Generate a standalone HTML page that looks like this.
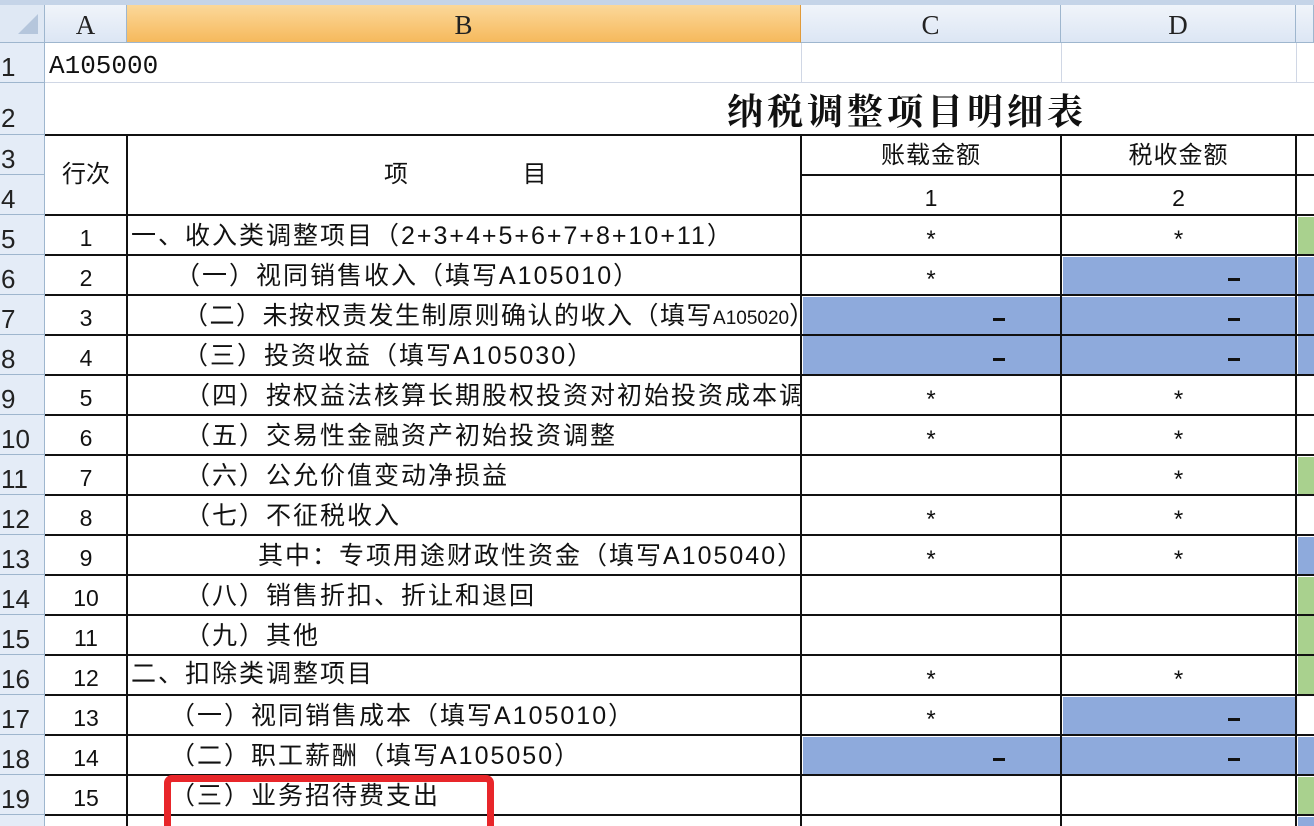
<!DOCTYPE html>
<html style="width:1314px;height:826px;overflow:hidden"><head><meta charset="utf-8"><style>
*{margin:0;padding:0;box-sizing:border-box}
body{width:1314px;height:826px;overflow:hidden;background:#fff;position:relative;font-family:"Liberation Sans","Noto Sans CJK SC",sans-serif;color:#111}
.a{position:absolute}
.rh{position:absolute;left:0;width:45px;background:#e4ecf7;border-bottom:1px solid #9eb6ce;border-right:1px solid #9eb6ce;font-family:"Liberation Sans",sans-serif;font-size:26px;color:#222;padding-left:1px}
.ch{position:absolute;top:5px;height:38px;background:linear-gradient(#f0f4fa,#dce6f4);border-right:1px solid #9eb6ce;border-bottom:1px solid #9eb6ce;font-family:"Liberation Serif",serif;font-size:27px;text-align:center;line-height:40px;color:#222}
.hl{position:absolute;left:45px;width:1269px;height:2px;background:#111}
.vl{position:absolute;top:135px;width:2px;height:691px;background:#111}
.t{position:absolute;font-family:"Liberation Sans","Noto Sans CJK SC",sans-serif;font-size:25px;letter-spacing:2px;white-space:nowrap;line-height:40px;height:40px}
.n{position:absolute;left:45px;width:82px;text-align:center;font-size:23px;line-height:40px;font-family:"Liberation Sans",sans-serif}
.s{position:absolute;font-size:24px;line-height:44px;text-align:center}
.bl{position:absolute;background:#8eaadc}
.gr{position:absolute;background:#a9d18e}
.d{position:absolute;width:12px;height:3px;background:#111}
</style></head><body>
<div class="a" style="left:0;top:0;width:1314px;height:5px;background:#c5d4e8"></div>
<div class="a" style="left:0;top:5px;width:45px;height:38px;background:#dfe8f4;border-right:1px solid #9eb6ce;border-bottom:1px solid #9eb6ce"></div>
<div class="a" style="left:18px;top:14px;width:0;height:0;border-left:20px solid transparent;border-bottom:20px solid #b5c6dc"></div>
<div class="ch" style="left:45px;width:82px">A</div>
<div class="ch" style="left:127px;width:674px;background:linear-gradient(#fbd89a,#f6b95c);border-right:1px solid #e09a3a">B</div>
<div class="ch" style="left:801px;width:260px">C</div>
<div class="ch" style="left:1061px;width:235px">D</div>
<div class="ch" style="left:1296px;width:18px"></div>

<div class="rh" style="top:43px;height:40px;line-height:48px">1</div>
<div class="rh" style="top:83px;height:52px;line-height:70px">2</div>
<div class="rh" style="top:135px;height:40px;line-height:48px">3</div>
<div class="rh" style="top:175px;height:40px;line-height:48px">4</div>
<div class="rh" style="top:215px;height:40px;line-height:48px">5</div>
<div class="rh" style="top:255px;height:40px;line-height:48px">6</div>
<div class="rh" style="top:295px;height:40px;line-height:48px">7</div>
<div class="rh" style="top:335px;height:40px;line-height:48px">8</div>
<div class="rh" style="top:375px;height:40px;line-height:48px">9</div>
<div class="rh" style="top:415px;height:40px;line-height:48px">10</div>
<div class="rh" style="top:455px;height:40px;line-height:48px">11</div>
<div class="rh" style="top:495px;height:40px;line-height:48px">12</div>
<div class="rh" style="top:535px;height:40px;line-height:48px">13</div>
<div class="rh" style="top:575px;height:40px;line-height:48px">14</div>
<div class="rh" style="top:615px;height:40px;line-height:48px">15</div>
<div class="rh" style="top:655px;height:40px;line-height:48px">16</div>
<div class="rh" style="top:695px;height:40px;line-height:48px">17</div>
<div class="rh" style="top:735px;height:40px;line-height:48px">18</div>
<div class="rh" style="top:775px;height:40px;line-height:48px">19</div>
<div class="rh" style="top:815px;height:11px;border-bottom:none"></div>

<div class="a" style="left:45px;top:82px;width:1269px;height:1px;background:#d0d7e5"></div>
<div class="a" style="left:801px;top:43px;width:1px;height:40px;background:#d0d7e5"></div>
<div class="a" style="left:1061px;top:43px;width:1px;height:40px;background:#d0d7e5"></div>
<div class="a" style="left:1296px;top:43px;width:1px;height:40px;background:#d0d7e5"></div>
<div class="a" style="left:49px;top:43px;font-family:'Liberation Mono',monospace;font-size:26px;line-height:46px">A105000</div>
<div class="a" style="left:727px;top:84px;font-family:'Noto Serif CJK SC',serif;font-weight:700;font-size:36px;letter-spacing:4px;line-height:52px;white-space:nowrap">纳税调整项目明细表</div>

<div class="gr" style="left:1298px;top:217px;width:16px;height:38px"></div>
<div class="bl" style="left:1063px;top:257px;width:233px;height:38px"></div>
<div class="bl" style="left:1298px;top:257px;width:16px;height:118px"></div>
<div class="bl" style="left:803px;top:297px;width:493px;height:78px"></div>
<div class="gr" style="left:1298px;top:457px;width:16px;height:38px"></div>
<div class="bl" style="left:1298px;top:537px;width:16px;height:38px"></div>
<div class="gr" style="left:1298px;top:577px;width:16px;height:118px"></div>
<div class="bl" style="left:1063px;top:697px;width:233px;height:38px"></div>
<div class="bl" style="left:803px;top:737px;width:493px;height:38px"></div>
<div class="bl" style="left:1298px;top:737px;width:16px;height:38px"></div>
<div class="gr" style="left:1298px;top:777px;width:16px;height:38px"></div>
<div class="bl" style="left:1298px;top:817px;width:16px;height:9px"></div>

<div class="hl" style="top:134px"></div>
<div class="a" style="left:801px;top:174px;width:513px;height:2px;background:#111"></div>
<div class="hl" style="top:214px"></div>
<div class="hl" style="top:254px"></div>
<div class="hl" style="top:294px"></div>
<div class="hl" style="top:334px"></div>
<div class="hl" style="top:374px"></div>
<div class="hl" style="top:414px"></div>
<div class="hl" style="top:454px"></div>
<div class="hl" style="top:494px"></div>
<div class="hl" style="top:534px"></div>
<div class="hl" style="top:574px"></div>
<div class="hl" style="top:614px"></div>
<div class="hl" style="top:654px"></div>
<div class="hl" style="top:694px"></div>
<div class="hl" style="top:734px"></div>
<div class="hl" style="top:774px"></div>
<div class="hl" style="top:814px"></div>
<div class="vl" style="left:126px"></div>
<div class="vl" style="left:800px"></div>
<div class="vl" style="left:1060px"></div>
<div class="vl" style="left:1295px"></div>

<div class="a" style="left:45px;top:135px;width:82px;line-height:80px;text-align:center;font-size:24px">行次</div>
<div class="a" style="left:384px;top:135px;line-height:80px;font-size:24px;letter-spacing:2px;white-space:nowrap">项&emsp;&emsp;&emsp;&emsp;&nbsp;目</div>
<div class="a" style="left:801px;top:136px;width:260px;text-align:center;line-height:40px;font-size:24px;letter-spacing:1px">账载金额</div>
<div class="a" style="left:1061px;top:136px;width:235px;text-align:center;line-height:40px;font-size:24px;letter-spacing:1px">税收金额</div>
<div class="a" style="left:801px;top:178px;width:260px;text-align:center;line-height:40px;font-size:23px">1</div>
<div class="a" style="left:1061px;top:178px;width:235px;text-align:center;line-height:40px;font-size:23px">2</div>

<div class="n" style="top:218px">1</div>
<div class="n" style="top:258px">2</div>
<div class="n" style="top:298px">3</div>
<div class="n" style="top:338px">4</div>
<div class="n" style="top:378px">5</div>
<div class="n" style="top:418px">6</div>
<div class="n" style="top:458px">7</div>
<div class="n" style="top:498px">8</div>
<div class="n" style="top:538px">9</div>
<div class="n" style="top:578px">10</div>
<div class="n" style="top:618px">11</div>
<div class="n" style="top:658px">12</div>
<div class="n" style="top:698px">13</div>
<div class="n" style="top:738px">14</div>
<div class="n" style="top:778px">15</div>

<div class="t" style="left:131px;top:216px">一、收入类调整项目（2+3+4+5+6+7+8+10+11）</div>
<div class="t" style="left:175px;top:256px">（一）视同销售收入（填写A105010）</div>
<div class="t" style="left:183px;top:296px;letter-spacing:1.5px">（二）未按权责发生制原则确认的收入（填写<span style="font-size:19px;letter-spacing:0">A105020</span>）</div>
<div class="t" style="left:183px;top:336px">（三）投资收益（填写A105030）</div>
<div class="t" style="left:185px;top:376px;width:615px;overflow:hidden">（四）按权益法核算长期股权投资对初始投资成本调</div>
<div class="t" style="left:185px;top:416px">（五）交易性金融资产初始投资调整</div>
<div class="t" style="left:185px;top:456px">（六）公允价值变动净损益</div>
<div class="t" style="left:185px;top:496px">（七）不征税收入</div>
<div class="t" style="left:258px;top:536px">其中：专项用途财政性资金（填写A105040）</div>
<div class="t" style="left:185px;top:576px">（八）销售折扣、折让和退回</div>
<div class="t" style="left:185px;top:616px">（九）其他</div>
<div class="t" style="left:131px;top:654px">二、扣除类调整项目</div>
<div class="t" style="left:170px;top:696px">（一）视同销售成本（填写A105010）</div>
<div class="t" style="left:170px;top:736px">（二）职工薪酬（填写A105050）</div>
<div class="t" style="left:170px;top:776px">（三）业务招待费支出</div>

<div class="s" style="left:801px;width:260px;top:218px">*</div><div class="s" style="left:1061px;width:235px;top:218px">*</div>
<div class="s" style="left:801px;width:260px;top:258px">*</div>
<div class="s" style="left:801px;width:260px;top:378px">*</div><div class="s" style="left:1061px;width:235px;top:378px">*</div>
<div class="s" style="left:801px;width:260px;top:418px">*</div><div class="s" style="left:1061px;width:235px;top:418px">*</div>
<div class="s" style="left:1061px;width:235px;top:458px">*</div>
<div class="s" style="left:801px;width:260px;top:498px">*</div><div class="s" style="left:1061px;width:235px;top:498px">*</div>
<div class="s" style="left:801px;width:260px;top:538px">*</div><div class="s" style="left:1061px;width:235px;top:538px">*</div>
<div class="s" style="left:801px;width:260px;top:658px">*</div><div class="s" style="left:1061px;width:235px;top:658px">*</div>
<div class="s" style="left:801px;width:260px;top:698px">*</div>

<div class="d" style="left:1228px;top:278px"></div>
<div class="d" style="left:993px;top:318px"></div><div class="d" style="left:1228px;top:318px"></div>
<div class="d" style="left:993px;top:358px"></div><div class="d" style="left:1228px;top:358px"></div>
<div class="d" style="left:1228px;top:718px"></div>
<div class="d" style="left:993px;top:758px"></div><div class="d" style="left:1228px;top:758px"></div>

<div class="a" style="left:164px;top:775px;width:330px;height:60px;border:7px solid #e8262a;border-radius:8px"></div>
</body></html>
